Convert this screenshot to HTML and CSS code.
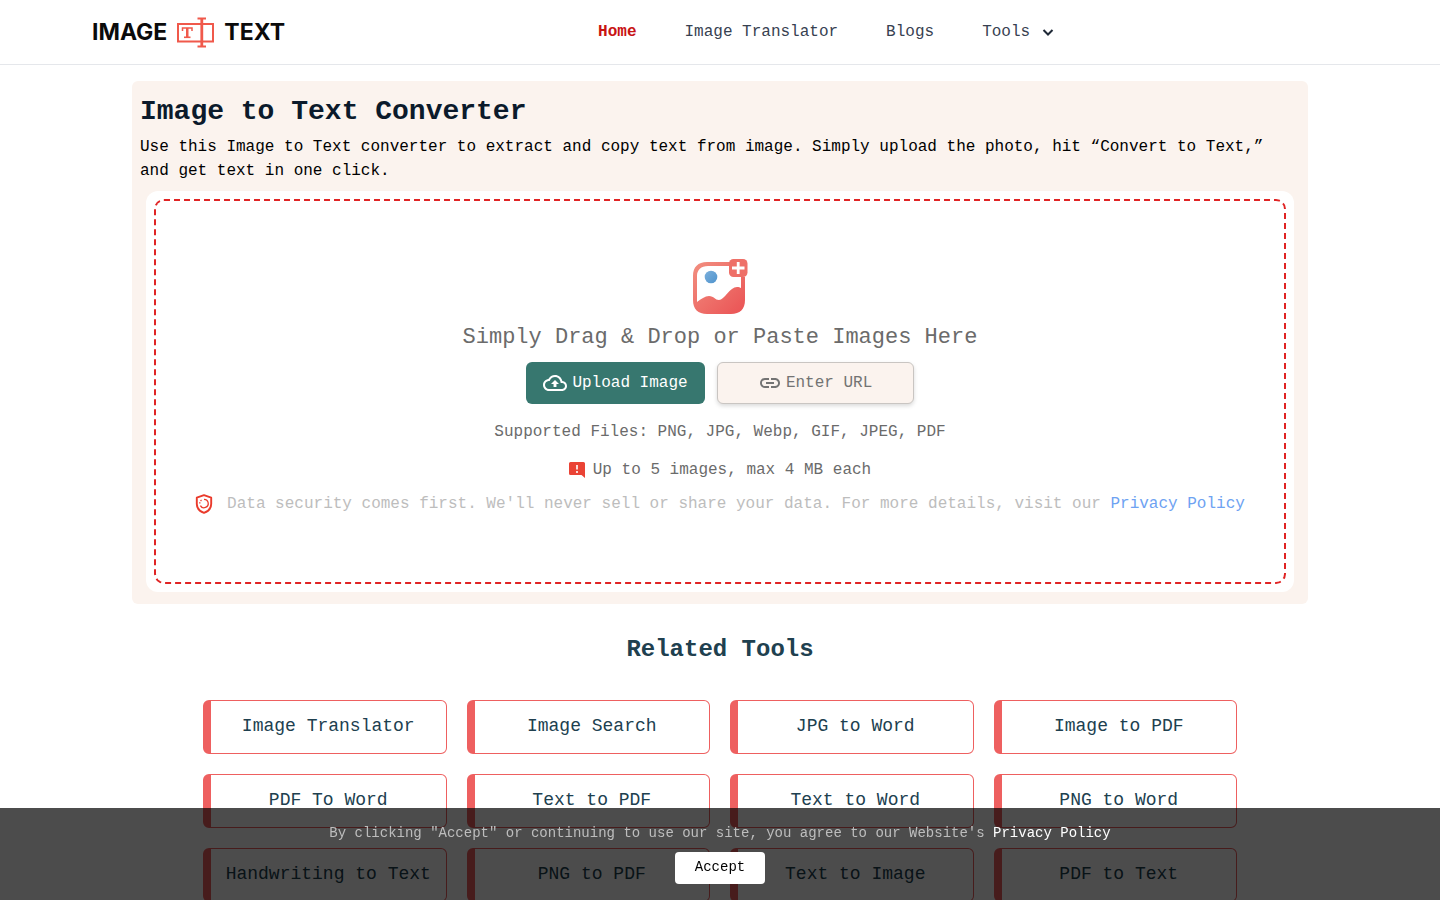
FILE: index.html
```html
<!DOCTYPE html>
<html lang="en">
<head>
<meta charset="utf-8">
<meta name="viewport" content="width=device-width, initial-scale=1">
<title>Image to Text Converter</title>
<link rel="stylesheet" href="styles.css">
</head>
<body>
<header class="site-header">
  <a class="logo" href="#">
    <span>IMAGE</span>
    <svg width="37" height="31" viewBox="0 0 37 31" fill="none" stroke="#f0594b" aria-hidden="true">
      <path d="M1 7H36V24.500H1Z" stroke-width="2"/>
      <path d="M20.500 1.500H29M20.500 29.500H29" stroke-width="2"/>
      <path d="M24.800 1.500V29.500" stroke-width="2.800"/>
      <path d="M5.500 14V11H15V14" stroke-width="1.500"/>
      <path d="M10.250 11V20" stroke-width="2.500"/>
      <path d="M7 20.300H13.500" stroke-width="1.600"/>
    </svg>
    <span>TEXT</span>
  </a>
  <nav class="nav">
    <a class="nav-link active" href="#">Home</a>
    <a class="nav-link" href="#">Image Translator</a>
    <a class="nav-link" href="#">Blogs</a>
    <button class="nav-link nav-menu" type="button">Tools
      <svg width="12" height="12" viewBox="0 0 12 12" fill="none" stroke="#1f2937" stroke-width="2" aria-hidden="true"><path d="M1.500 4L6 8.500L10.500 4"/></svg>
    </button>
  </nav>
</header>

<main class="page">
  <section class="hero">
    <h1>Image to Text Converter</h1>
    <p class="intro">Use this Image to Text converter to extract and copy text from image. Simply upload the photo, hit “Convert to Text,” and get text in one click.</p>
    <div class="drop-card">
      <div class="drop-zone">
        <svg class="drop-icon" width="56" height="56" viewBox="0 0 56 56" aria-hidden="true">
          <defs>
            <linearGradient id="coral" x1="0" y1="0" x2="1" y2="1"><stop offset="0" stop-color="#f28f80"/><stop offset="1" stop-color="#ea5254"/></linearGradient>
            <linearGradient id="sky" x1="0" y1="0" x2="1" y2="1"><stop offset="0" stop-color="#7bafdb"/><stop offset="1" stop-color="#4f93cd"/></linearGradient>
          </defs>
          <path fill="url(#coral)" fill-rule="evenodd" d="M15 3H38V7H16C9 7 5 11 5 17V43C9 40 13 37 17 37C22 37 23 41 27 41C32 41 38 28 45 28C47 28 48 28.500 49 29V18H53V41C53 50 48 55 39 55H15C6 55 1 50 1 41V17C1 8 6 3 15 3Z"/>
          <circle cx="19" cy="18" r="6.300" fill="url(#sky)"/>
          <rect x="37" y="0" width="18.500" height="18" rx="4.500" fill="#ee7068"/>
          <path d="M46.200 3V15M40 9H52.500" stroke="#fff" stroke-width="2.800"/>
        </svg>
        <p class="drop-title">Simply Drag &amp; Drop or Paste Images Here</p>
        <div class="actions">
          <button class="btn btn-upload" type="button">
            <svg width="24" height="24" viewBox="0 0 24 24" fill="currentColor" aria-hidden="true"><path d="M19.350 10.040C18.670 6.590 15.640 4 12 4 9.110 4 6.600 5.640 5.350 8.040 2.340 8.360 0 10.910 0 14c0 3.310 2.690 6 6 6h13c2.760 0 5-2.240 5-5 0-2.640-2.050-4.780-4.650-4.960zM19 18H6c-2.210 0-4-1.790-4-4 0-2.050 1.530-3.760 3.560-3.970l1.070-.11.5-.95C8.080 7.140 9.940 6 12 6c2.620 0 4.880 1.860 5.390 4.430l.3 1.500 1.530.11c1.560.1 2.780 1.410 2.780 2.960 0 1.650-1.350 3-3 3zM8 13h2.550v3h2.900v-3H16l-4-4z"/></svg>
            Upload Image
          </button>
          <button class="btn btn-url" type="button">
            <svg width="24" height="24" viewBox="0 0 24 24" fill="currentColor" aria-hidden="true"><path d="M3.900 12c0-1.710 1.390-3.100 3.100-3.100h4V7H7c-2.760 0-5 2.240-5 5s2.240 5 5 5h4v-1.900H7c-1.710 0-3.100-1.390-3.100-3.100zM8 13h8v-2H8v2zm9-6h-4v1.900h4c1.710 0 3.100 1.390 3.100 3.100s-1.390 3.100-3.100 3.100h-4V17h4c2.760 0 5-2.240 5-5s-2.240-5-5-5z"/></svg>
            Enter URL
          </button>
        </div>
        <p class="formats">Supported Files: PNG, JPG, Webp, GIF, JPEG, PDF</p>
        <p class="limit">
          <svg width="16" height="16" viewBox="0 0 16 16" aria-hidden="true"><path fill="#ea4335" d="M1.500 0H14.500Q16 0 16 1.500V16L12.500 13H1.500Q0 13 0 11.500V1.500Q0 0 1.500 0Z"/><path d="M8 3V7.500M8 9V11" stroke="#fff" stroke-width="1.600"/></svg>
          Up to 5 images, max 4 MB each
        </p>
        <div class="privacy">
          <svg width="18" height="20" viewBox="0 0 18 20" fill="none" stroke="#ea3a2b" aria-hidden="true"><path d="M9 1.200L16.200 3.700V10C16.200 14.500 13 17.500 9 18.900C5 17.500 1.800 14.500 1.800 10V3.700Z" stroke-width="1.900" stroke-linejoin="round"/><path d="M9 5.300A4.200 4.200 0 1 1 5.400 11.600" stroke-width="1.300"/><path d="M4.800 9.500A4.200 4.200 0 0 1 7.500 5.600" stroke-width="1.300" stroke-dasharray="1.300 1.300"/></svg>
          <p>Data security comes first. We'll never sell or share your data. For more details, visit our <a href="#">Privacy Policy</a></p>
        </div>
      </div>
    </div>
  </section>

  <section class="related">
    <h2>Related Tools</h2>
    <div class="tool-grid">
      <a class="tool" href="#">Image Translator</a>
      <a class="tool" href="#">Image Search</a>
      <a class="tool" href="#">JPG to Word</a>
      <a class="tool" href="#">Image to PDF</a>
      <a class="tool" href="#">PDF To Word</a>
      <a class="tool" href="#">Text to PDF</a>
      <a class="tool" href="#">Text to Word</a>
      <a class="tool" href="#">PNG to Word</a>
      <a class="tool" href="#">Handwriting to Text</a>
      <a class="tool" href="#">PNG to PDF</a>
      <a class="tool" href="#">Text to Image</a>
      <a class="tool" href="#">PDF to Text</a>
    </div>
  </section>
</main>

<aside class="consent">
  <p>By clicking "Accept" or continuing to use our site, you agree to our Website's <a href="#">Privacy Policy</a></p>
  <button type="button">Accept</button>
</aside>
</body>
</html>
```

FILE: styles.css
```css
* { box-sizing: border-box; }
body {
  margin: 0;
  background: #fff;
  color: #000;
  font: 16px/24px "Liberation Mono", monospace;
}
h1, h2, p { margin: 0; }
a { color: inherit; text-decoration: none; }
button { font: inherit; cursor: pointer; }
svg { flex: none; display: block; }

.site-header {
  display: flex;
  align-items: center;
  height: 65px;
  padding: 0 92px;
  border-bottom: 1px solid #e5e7eb;
}
.logo {
  display: flex;
  align-items: center;
  gap: 10px;
  color: #0b0b0b;
  font: 700 23px/24px Inter, sans-serif;
}
.nav {
  display: flex;
  align-items: center;
  gap: 48px;
  margin-left: 313px;
}
.nav-link { color: #374151; }
.nav-link.active { color: #c81414; font-weight: 700; }
.nav-menu {
  display: flex;
  align-items: center;
  gap: 12px;
  padding: 0;
  border: 0;
  background: none;
}

.page { padding: 16px 16px 0; }
.hero {
  max-width: 1176px;
  margin: 0 auto;
  padding: 10px 8px 12px;
  border-radius: 6px;
  background: #fbf3ee;
}
.hero h1 {
  margin-bottom: 2px;
  color: #0b1a2b;
  font-size: 28px;
  line-height: 42px;
}
.drop-card {
  margin: 8px 6px 0;
  padding: 8px;
  border-radius: 12px;
  background: #fff;
}
.drop-zone {
  display: flex;
  flex-direction: column;
  align-items: center;
  padding: 58px 16px 66px;
  border: 2px dashed #e02424;
  border-radius: 10px;
  color: #6b6b6b;
}
.drop-title {
  margin: 6px 0 8px;
  font-size: 22px;
  line-height: 33px;
}
.actions { display: flex; gap: 12px; margin-bottom: 16px; }
.btn {
  display: flex;
  align-items: center;
  justify-content: center;
  height: 42px;
  border-radius: 6px;
}
.btn-upload {
  gap: 5px;
  padding: 0 17px;
  border: 0;
  background: #37776f;
  color: #fff;
}
.btn-url {
  gap: 4px;
  width: 197px;
  border: 1px solid #c9c5c2;
  background: #fbf3ee;
  color: #737373;
  box-shadow: 0 2px 4px rgba(0, 0, 0, .15);
}
.formats { margin-bottom: 14px; }
.limit { display: flex; align-items: center; gap: 8px; margin-bottom: 10px; }
.privacy {
  display: flex;
  align-items: center;
  gap: 14px;
  color: #bdbdbd;
}
.privacy a { color: #6ea2f2; }

.related {
  max-width: 1034px;
  margin: 28px auto 0;
  padding-bottom: 64px;
}
.related h2 {
  margin-bottom: 32px;
  color: #20404f;
  font-size: 24px;
  line-height: 36px;
  text-align: center;
}
.tool-grid {
  display: grid;
  grid-template-columns: repeat(4, 1fr);
  gap: 20px;
}
.tool {
  display: block;
  height: 54px;
  padding: 12px 4px 0;
  border: 1px solid #ee6060;
  border-left-width: 8px;
  border-radius: 6px;
  color: #20404f;
  font-size: 18px;
  line-height: 27px;
  text-align: center;
}

.consent {
  position: fixed;
  right: 0;
  bottom: 0;
  left: 0;
  display: flex;
  flex-direction: column;
  align-items: center;
  gap: 7px;
  padding: 13px 16px 16px;
  background: rgba(0, 0, 0, .7);
  color: #bdbdbd;
  font-size: 14px;
}
.consent a { color: #fff; }
.consent button {
  height: 32px;
  padding: 0 20px 2px;
  border: 0;
  border-radius: 4px;
  background: #fff;
  color: #000;
}
```
